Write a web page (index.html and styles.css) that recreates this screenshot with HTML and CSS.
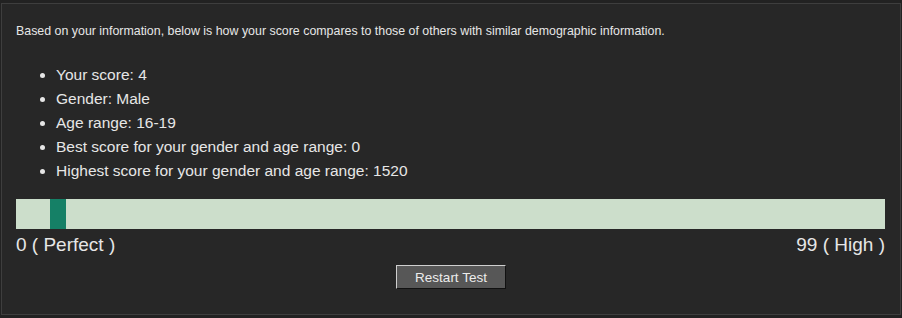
FILE: index.html
```html
<!DOCTYPE html>
<html>
<head>
<meta charset="utf-8">
<link rel="stylesheet" href="styles.css">
</head>
<body>
<div class="panel">
  <p class="intro">Based on your information, below is how your score compares to those of others with similar demographic information.</p>
  <ul class="facts">
    <li>Your score: 4</li>
    <li>Gender: Male</li>
    <li>Age range: 16-19</li>
    <li>Best score for your gender and age range: 0</li>
    <li>Highest score for your gender and age range: 1520</li>
  </ul>
  <div class="bar">
    <div class="marker" style="margin-left: 34px"></div>
  </div>
  <div class="scale">
    <span>0 ( Perfect )</span>
    <span>99 ( High )</span>
  </div>
  <div class="actions">
    <button class="btn">Restart Test</button>
  </div>
</div>
</body>
</html>
```
FILE: styles.css
```css
html, body {
  margin: 0;
  padding: 0;
  background: #222222;
}
body {
  font-family: "Liberation Sans", Arial, sans-serif;
  color: #e6e6e6;
  padding: 3px 1px 0 1px;
}
.panel {
  background: #272727;
  border: 1px solid #3e3e3e;
  height: 312px;
  box-sizing: border-box;
  padding: 0 15px 0 14px;
}
.intro {
  margin: 0;
  padding-top: 20px;
  font-size: 12.4px;
  line-height: 14px;
}
.facts {
  margin: 25px 0 0 0;
  padding-left: 40px;
  font-size: 15.5px;
  line-height: 24px;
}
.facts li {
  list-style: disc;
}
.bar {
  margin-top: 16px;
  height: 30px;
  background: #ccdecb;
  display: flex;
}
.marker {
  width: 16px;
  background: #158066;
}
.scale {
  display: flex;
  justify-content: space-between;
  font-size: 19px;
  line-height: 22px;
  margin-top: 5px;
}
.actions {
  display: flex;
  justify-content: center;
  margin-top: 9px;
}
.btn {
  width: 110px;
  height: 24px;
  background: #575757;
  color: #ececec;
  font-family: "Liberation Sans", Arial, sans-serif;
  font-size: 13.5px;
  border-style: solid;
  border-width: 1px;
  border-color: #cfcfcf #111111 #111111 #cfcfcf;
  padding: 0;
  margin-left: 1px;
}
```
